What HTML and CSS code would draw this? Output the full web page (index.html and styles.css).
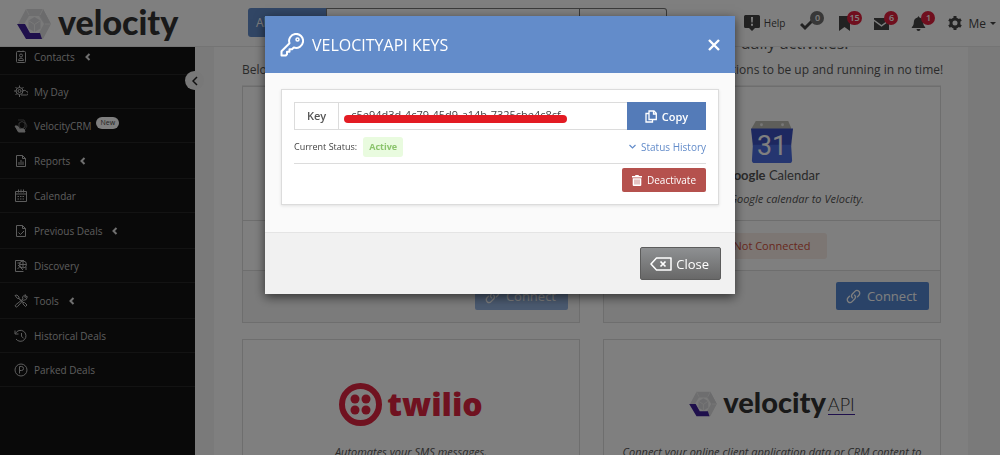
FILE: index.html
```
<!DOCTYPE html>
<html lang="en">

<head>
    <meta charset="UTF-8">
    <meta name="viewport" content="width=device-width, initial-scale=1.0">
    <title>Velocity - Integrations</title>
    <link rel="stylesheet" href="styles.css">
</head>

<body>
    <!-- shared shapes -->
    <svg class="sprite" aria-hidden="true">
        <symbol id="velocity-mark" viewBox="0 0 34 32">
            <path fill="#dcdcde" d="M9 1h17l8 15-8 15h-3l-3-6h-9L6 16H1z" />
            <path fill="#f4f4f4" d="M12 8h10l5 8-5 9H12l-5-9z" />
            <path fill="#d6d6d9" d="M26 1l8 15h-6l-5-9z" />
            <path fill="#d9d9dc" d="M11.500 12.500L17.500 9l6 3.500v8l-6 3.500-6-3.500z" />
            <path fill="none" stroke="#f0f0f0" stroke-width="1" d="M11.500 12.500l6 4 6-4M17.500 16.500V24M23 7l3-6M12 7L9 1M28 16h6" />
            <path fill="#3f2198" d="M0 16h8l5 9h10l2 6H9z" />
        </symbol>
        <symbol id="link" viewBox="0 0 16 16">
            <g fill="none" stroke="currentColor" stroke-width="1.4" stroke-linecap="round">
                <path d="M7 9.500a3 3 0 0 1-.2-4.200l2.700-2.800a3 3 0 0 1 4.300 4.200l-1.600 1.700" />
                <path d="M9 6.500a3 3 0 0 1 .2 4.200l-2.700 2.800a3 3 0 0 1-4.300-4.200l1.600-1.700" />
            </g>
        </symbol>
    </svg>

    <header class="topbar">
        <a class="logo" href="#">
            <svg class="logo__mark"><use href="#velocity-mark" /></svg>
            <span class="logo__text">velocity</span>
        </a>
        <form class="search">
            <button class="search__filter" type="button">All Deals</button>
            <input class="search__input" type="search" aria-label="Search">
            <button class="search__submit" type="button" aria-label="Run search"></button>
        </form>
        <nav class="tools">
            <a class="tools__item tools__item--help" href="#">
                <svg width="16" height="16" viewBox="0 0 16 16"><path fill="currentColor" d="M1.500 0h13A1.500 1.500 0 0 1 16 1.500v10a1.500 1.500 0 0 1-1.500 1.500H11l-3 3-3-3H1.500A1.500 1.500 0 0 1 0 11.500v-10A1.500 1.500 0 0 1 1.500 0z" /><path fill="#fff" d="M7 2h2l-.3 5.500H7.300zM7 8.800h2v2H7z" /></svg>
                <span>Help</span>
            </a>
            <a class="tools__item" href="#" aria-label="Tasks">
                <svg width="15" height="15" viewBox="0 0 15 15"><path fill="none" stroke="currentColor" stroke-width="3" d="M1 8l4 4 9-9" /></svg>
                <span class="badge badge--grey">0</span>
            </a>
            <a class="tools__item" href="#" aria-label="Bookmarks">
                <svg width="15" height="15" viewBox="0 0 15 15"><path fill="currentColor" d="M2 0h11v15l-5.500-4L2 15z" /></svg>
                <span class="badge">15</span>
            </a>
            <a class="tools__item" href="#" aria-label="Messages">
                <svg width="15" height="15" viewBox="0 0 15 15"><path fill="currentColor" d="M0 2h15v1.500L7.500 9 0 3.500zM0 5.200l7.500 5.500L15 5.200V14H0z" /></svg>
                <span class="badge">6</span>
            </a>
            <a class="tools__item" href="#" aria-label="Alerts">
                <svg width="15" height="15" viewBox="0 0 15 15"><path fill="currentColor" d="M7.500 0l1 1.500c2.500.5 3.700 2.500 3.700 5 0 2.500.8 3.500 2 4.700v.8H.8v-.8c1.200-1.200 2-2.200 2-4.700 0-2.500 1.200-4.500 3.700-5zM5.500 13h4a2 2 0 0 1-4 0z" /></svg>
                <span class="badge">1</span>
            </a>
            <a class="tools__item tools__item--me" href="#">
                <svg width="14" height="14" viewBox="0 0 14 14"><circle cx="7" cy="7" r="4" fill="none" stroke="currentColor" stroke-width="3" /><path stroke="currentColor" stroke-width="3" d="M7 0v3M7 11v3M1 3.500l2.500 1.500M10.500 9l2.500 1.500M1 10.500L3.500 9M10.500 5L13 3.500" /></svg>
                <span>Me</span>
                <i class="caret"></i>
            </a>
        </nav>
    </header>

    <aside class="sidebar">
        <ul class="menu">
            <li class="menu__item menu__item--parent">
                <a class="menu__link" href="#">
                    <svg class="menu__icon" viewBox="0 0 14 14"><rect x="2.500" y="1.500" width="9" height="11" rx="1" /><circle cx="7" cy="5.500" r="1.500" /><path d="M4.500 10.500c0-3 5-3 5 0zM5 0.500v1M9 0.500v1" /></svg>
                    <span>Contacts</span>
                    <svg class="menu__arrow" viewBox="0 0 6 8"><path d="M4.500 1l-3 3 3 3" /></svg>
                </a>
            </li>
            <li class="menu__item">
                <a class="menu__link" href="#">
                    <svg class="menu__icon" viewBox="0 0 14 14"><circle cx="5.500" cy="6" r="3.500" /><circle cx="5.500" cy="6" r="1.500" /><path d="M5.500.500v2M5.500 10v2M0 6h2M1.500 2l1.500 1.500M1.500 10L3 8.500M9.500 2L8 3.500M7 10h5.500a1.600 1.600 0 0 0 0-3.500A2.500 2.500 0 0 0 8 7" /></svg>
                    <span>My Day</span>
                </a>
            </li>
            <li class="menu__item">
                <a class="menu__link" href="#">
                    <svg class="menu__icon" viewBox="0 0 14 14"><path d="M4 1h6l3 6-3 5" opacity=".4" /><path d="M5 4l3-1.500L11 4v4L8 10 5 8z" opacity=".5" /><path fill="currentColor" d="M1 7h2.500l2 3H10l1 3H4.500z" /></svg>
                    <span>VelocityCRM</span>
                    <em class="menu__new">New</em>
                </a>
            </li>
            <li class="menu__item menu__item--parent">
                <a class="menu__link" href="#">
                    <svg class="menu__icon" viewBox="0 0 14 14"><path d="M2.500 1.500h6l3 3v8h-9zM8.500 1.500v3h3M5 11V8M7 11V6M9 11V7.500" /></svg>
                    <span>Reports</span>
                    <svg class="menu__arrow" viewBox="0 0 6 8"><path d="M4.500 1l-3 3 3 3" /></svg>
                </a>
            </li>
            <li class="menu__item">
                <a class="menu__link" href="#">
                    <svg class="menu__icon" viewBox="0 0 14 14"><path d="M1.500 2.500h11v10h-11zM1.500 5h11M4.500.500v3M9.500.500v3M7 .500v3" /><path stroke-dasharray="1.500 1" d="M3.500 7.500h7.500M3.500 10h7.500" /></svg>
                    <span>Calendar</span>
                </a>
            </li>
            <li class="menu__item menu__item--parent">
                <a class="menu__link" href="#">
                    <svg class="menu__icon" viewBox="0 0 14 14"><path d="M2.500 1.500h6l3 3v8h-9zM8.500 1.500v3h3M4.500 8.500l2 2 3.500-3.500" /></svg>
                    <span>Previous Deals</span>
                    <svg class="menu__arrow" viewBox="0 0 6 8"><path d="M4.500 1l-3 3 3 3" /></svg>
                </a>
            </li>
            <li class="menu__item">
                <a class="menu__link" href="#">
                    <svg class="menu__icon" viewBox="0 0 14 14"><path d="M10 1.500H1.500v11h8M3.500 4h3M3.500 10l3-3M4 6l5 5M12 8v3" /><circle cx="9" cy="5.500" r="3.500" /><path d="M5.500 5.500h7M9 2v7" /></svg>
                    <span>Discovery</span>
                </a>
            </li>
            <li class="menu__item menu__item--parent">
                <a class="menu__link" href="#">
                    <svg class="menu__icon" viewBox="0 0 14 14"><path d="M1 1.500l2-.5 2 2v1.500l4 4h1.500l2.500 2.500-1.500 1.500L9 10V8.500l-4-4H3.500zM9 5l-.5-2L10.500 1h1.500L10.500 3l.5.5L13 2v2l-1.500 2H9.500l-6 6.500a1 1 0 0 1-2-1.500z" /></svg>
                    <span>Tools</span>
                    <svg class="menu__arrow" viewBox="0 0 6 8"><path d="M4.500 1l-3 3 3 3" /></svg>
                </a>
            </li>
            <li class="menu__item">
                <a class="menu__link" href="#">
                    <svg class="menu__icon" viewBox="0 0 14 14"><path d="M1 1.500V5h3.500M1.500 4.500a5.500 5.500 0 1 1 .5 5.500M7.500 4v3.500l2 1.500" /></svg>
                    <span>Historical Deals</span>
                </a>
            </li>
            <li class="menu__item">
                <a class="menu__link" href="#">
                    <svg class="menu__icon" viewBox="0 0 14 14"><circle cx="7" cy="7" r="6" /><path d="M5.500 10.500v-7h2a2 2 0 0 1 0 4h-2" /></svg>
                    <span>Parked Deals</span>
                </a>
            </li>
        </ul>
        <button class="sidebar__toggle" type="button" aria-label="Collapse menu">
            <svg width="6" height="10" viewBox="0 0 6 10"><path fill="none" stroke="currentColor" stroke-width="1.500" d="M5 1L1 5l4 4" /></svg>
        </button>
    </aside>

    <main class="content">
        <section class="panel">
            <h1 class="panel__title">Connect Velocity to the applications you use with your daily activities.</h1>
            <p class="panel__intro">Below is a list of our integrations, pick the ones you need and follow their simple instructions to be up and running in no time!</p>
            <div class="cards">
                <article class="card">
                    <div class="card__body"></div>
                    <div class="card__status"></div>
                    <div class="card__footer">
                        <button class="connect" type="button" disabled><svg width="15" height="15"><use href="#link" /></svg>Connect</button>
                    </div>
                </article>
                <article class="card">
                    <div class="card__body">
                        <div class="card__logo card__logo--google">
                            <svg width="44" height="44" viewBox="0 0 46 46">
                                <path fill="#bdbdb5" d="M6 1h34l3 7v4H2V8z" />
                                <circle cx="12" cy="5" r="1.500" fill="#eee" /><circle cx="34" cy="5" r="1.500" fill="#eee" />
                                <path fill="#3a50c0" d="M1 9h44l-2 18H3z" />
                                <path fill="#4a6ce0" d="M3 26h40l1 16q0 3-3 3H5q-3 0-3-3z" />
                                <text class="date" x="23" y="37" text-anchor="middle">31</text>
                            </svg>
                            <span><b>Google</b> Calendar</span>
                        </div>
                        <p class="card__text">Sync your Google calendar to Velocity.</p>
                    </div>
                    <div class="card__status"><span class="state">Not Connected</span></div>
                    <div class="card__footer">
                        <button class="connect" type="button"><svg width="15" height="15"><use href="#link" /></svg>Connect</button>
                    </div>
                </article>
                <article class="card">
                    <div class="card__body">
                        <div class="card__logo card__logo--twilio">
                            <svg width="43" height="43" viewBox="0 0 43 43">
                                <circle cx="21.500" cy="21.500" r="18.500" fill="none" stroke="currentColor" stroke-width="6" />
                                <g fill="currentColor"><circle cx="16" cy="16" r="4.500" /><circle cx="27" cy="16" r="4.500" /><circle cx="16" cy="27" r="4.500" /><circle cx="27" cy="27" r="4.500" /></g>
                            </svg>
                            <span>twilio</span>
                        </div>
                        <p class="card__text">Automates your SMS messages.</p>
                    </div>
                </article>
                <article class="card">
                    <div class="card__body">
                        <div class="card__logo card__logo--api">
                            <svg width="28" height="26"><use href="#velocity-mark" /></svg>
                            <span class="api-name">velocity</span>
                            <span class="api-tag">API</span>
                        </div>
                        <p class="card__text">Connect your online client application data or CRM content to Velocity.</p>
                    </div>
                </article>
            </div>
        </section>
    </main>

    <div class="backdrop">
        <div class="modal" role="dialog" aria-modal="true" aria-labelledby="modal-title">
            <div class="modal__header">
                <svg width="24" height="24" viewBox="0 0 24 24"><path fill="none" stroke="currentColor" stroke-width="2" stroke-linejoin="round" d="M9.500 10.200A7 7 0 1 1 13.800 14.500L12 16.300H9.500v2.500H7v2.500L5.800 22.500H1.500V18.200z" /><circle cx="17.500" cy="6.500" r="1.500" fill="none" stroke="currentColor" stroke-width="1.500" /></svg>
                <h2 class="modal__title" id="modal-title">VELOCITYAPI KEYS</h2>
                <button class="modal__close" type="button" aria-label="Close dialog">
                    <svg width="12" height="12" viewBox="0 0 12 12"><path stroke="currentColor" stroke-width="2.400" d="M1 1l10 10M11 1L1 11" /></svg>
                </button>
            </div>
            <div class="modal__body">
                <div class="key">
                    <div class="key__group">
                        <label class="key__label" for="api-key">Key</label>
                        <div class="key__field">
                            <input class="key__input" id="api-key" type="text" value="c5e94d3d-4c79-45d9-a14b-7325cbe4c8cf" readonly>
                            <span class="key__mask"></span>
                        </div>
                        <button class="key__copy" type="button">
                            <svg width="12" height="13" viewBox="0 0 12 13"><path fill="none" stroke="currentColor" stroke-width="1.300" d="M4 1h5l2.300 2.300V9.500H4zM8.500 1v3h3M4 3.500H1V12h6.500V9.500" /></svg>
                            Copy
                        </button>
                    </div>
                    <div class="key__status">
                        <span>Current Status:</span>
                        <strong class="key__active">Active</strong>
                        <a class="key__history" href="#">
                            <svg width="7" height="5" viewBox="0 0 7 5"><path fill="none" stroke="currentColor" stroke-width="1.200" d="M.5 1l3 3 3-3" /></svg>
                            Status History
                        </a>
                    </div>
                    <div class="key__actions">
                        <button class="key__deactivate" type="button">
                            <svg width="10" height="11" viewBox="0 0 10 11"><path fill="currentColor" d="M0 1h3l.5-1h3L7 1h3v1.500H0zM.7 3.200h8.600V10q0 1-1 1H1.700q-1 0-1-1z" /><path stroke="#b5514d" stroke-width=".7" d="M3 4.500v5M5 4.500v5M7 4.500v5" /></svg>
                            Deactivate
                        </button>
                    </div>
                </div>
            </div>
            <div class="modal__footer">
                <button class="close" type="button">
                    <svg width="22" height="14" viewBox="0 0 22 14"><path fill="none" stroke="currentColor" stroke-width="1.500" stroke-linejoin="round" d="M6.500 1H21v12H6.500L1 7z" /><path stroke="currentColor" stroke-width="1.700" d="M10.500 4.500l5 5M15.500 4.500l-5 5" /></svg>
                    Close
                </button>
            </div>
        </div>
    </div>
</body>

</html>
```
FILE: styles.css
```
:root {
    --blue: #638cca;
    --blue-dark: #547bb8;
    --line: #dcdcdc;
    --text: #555555;
}

* {
    box-sizing: border-box;
}

body {
    background-color: #f4f4f4;
    color: var(--text);
    display: flex;
    font-family: 'Open Sans', sans-serif;
    font-size: 12px;
    height: 100vh;
    margin: 0;
    overflow: hidden;
}

button,
input {
    font-family: inherit;
}

a {
    color: inherit;
    text-decoration: none;
}

svg {
    flex-shrink: 0;
}

.sprite {
    display: none;
}

/* top bar */

.topbar {
    align-items: center;
    background-color: #ffffff;
    border-bottom: 1px solid #e8e8e8;
    display: flex;
    height: 47px;
    left: 0;
    padding: 0 4px 0 17px;
    position: fixed;
    right: 0;
    top: 0;
    z-index: 2;
}

.logo {
    align-items: center;
    color: #333333;
    display: flex;
    gap: 7px;
    width: 231px;
}

.logo__mark {
    height: 32px;
    margin-top: 2px;
    width: 34px;
}

.logo__text {
    font-family: Lato, sans-serif;
    font-size: 34px;
    font-weight: 900;
    line-height: 40px;
    padding-bottom: 2px;
}

.search {
    display: flex;
    height: 29px;
    margin-bottom: 2px;
    width: 419px;
}

.search__filter {
    background-color: var(--blue);
    border: 0;
    border-radius: 3px 0 0 3px;
    color: #ffffff;
    font-size: 12px;
    padding: 0 8px;
    text-align: left;
    width: 78px;
}

.search__input {
    background-color: #ffffff;
    border: 1px solid #777777;
    flex: 1;
    min-width: 0;
}

.search__submit {
    background-color: #ffffff;
    border: 1px solid #777777;
    border-left: 0;
    border-radius: 0 3px 3px 0;
    width: 87px;
}

.tools {
    align-items: center;
    color: #444444;
    display: flex;
    gap: 22px;
    margin-left: auto;
}

.tools__item {
    align-items: center;
    display: flex;
    position: relative;
}

.tools__item--help {
    font-size: 10px;
    gap: 4px;
    margin-right: -7px;
}

.tools__item--me {
    font-size: 12px;
    gap: 6px;
}

.tools__item--me .caret {
    margin-left: -2px;
}

.badge {
    background-color: #e01f3d;
    border-radius: 7px;
    color: #ffffff;
    font-size: 9px;
    font-weight: 600;
    left: 10px;
    line-height: 14px;
    min-width: 14px;
    padding: 0 2px;
    position: absolute;
    text-align: center;
    top: -5px;
}

.badge--grey {
    background-color: #707070;
}

.caret {
    border: 3px solid transparent;
    border-bottom: 0;
    border-top-color: #444444;
}

/* sidebar */

.sidebar {
    background-color: #121212;
    flex: 0 0 195px;
    padding-top: 39px;
    position: relative;
}

.sidebar__toggle {
    align-items: center;
    background-color: #f0f0f0;
    border: 0;
    border-radius: 50%;
    color: #222222;
    display: flex;
    height: 19px;
    justify-content: center;
    padding: 0;
    position: absolute;
    right: -9px;
    top: 71px;
    width: 19px;
}

.menu {
    list-style: none;
    margin: 0;
    padding: 0;
}

.menu__item {
    border-bottom: 1px solid #262626;
    height: 34px;
}

.menu__item--parent {
    height: 36px;
}

.menu__link {
    align-items: center;
    color: #bbbbbb;
    display: flex;
    font-size: 10px;
    height: 100%;
    padding-left: 14px;
}

.menu__icon {
    fill: none;
    height: 14px;
    margin-right: 6px;
    stroke: currentColor;
    width: 14px;
}

.menu__arrow {
    fill: none;
    height: 8px;
    margin-left: 10px;
    stroke: #e0e0e0;
    stroke-width: 2;
    width: 6px;
}

.menu__new {
    background-color: #ffffff;
    border-radius: 7px;
    color: #444444;
    font-size: 7px;
    font-style: normal;
    line-height: 12px;
    margin: 0 0 5px 5px;
    padding: 0 4px;
}

/* page content */

.content {
    flex: 1;
    min-width: 0;
    padding: 0 32px 0 19px;
}

.panel {
    background-color: #ffffff;
    min-height: 100%;
    padding: 32px 27px 0 28px;
}

.panel__title {
    font-size: 16px;
    font-weight: 400;
    line-height: 22px;
    margin: 0;
    text-align: center;
}

.panel__intro {
    border-bottom: 1px solid #ededed;
    font-size: 12px;
    line-height: 22px;
    margin: 0;
    padding: 5px 0 4px;
    text-align: center;
    white-space: nowrap;
}

.cards {
    display: grid;
    gap: 16px 23px;
    grid-template-columns: 1fr 1fr;
}

.card {
    border: 1px solid var(--line);
    display: flex;
    flex-direction: column;
}

.card__body {
    align-items: center;
    display: flex;
    flex: 1;
    flex-direction: column;
    min-height: 133px;
    padding: 24px 12px 0;
    text-align: center;
}

.card__logo {
    align-items: center;
    display: flex;
    height: 80px;
    justify-content: center;
}

.card__logo--google {
    flex-direction: column;
    font-family: Lato, sans-serif;
    font-size: 13px;
    gap: 3px;
}

.date {
    fill: #ffffff;
    font-family: Roboto, sans-serif;
    font-size: 28px;
}

.card__logo--twilio {
    color: #e02540;
    font-size: 32px;
    font-weight: 800;
    gap: 5px;
    line-height: 40px;
}

.card__logo--api {
    color: #333333;
    font-family: Lato, sans-serif;
}

.api-name {
    font-size: 29px;
    font-weight: 900;
    line-height: 32px;
    margin: 0 2px 4px 6px;
}

.api-tag {
    border-bottom: 1px solid #3f2198;
    font-size: 18px;
    font-weight: 300;
    line-height: 20px;
}

.card__text {
    font-size: 11px;
    font-style: italic;
    line-height: 16px;
    margin: 0;
}

.card__status {
    border-top: 1px solid var(--line);
    height: 50px;
    padding: 12px;
    text-align: center;
}

.state {
    background-color: #f8ece6;
    border-radius: 3px;
    color: #d0503c;
    display: inline-block;
    font-size: 11px;
    line-height: 26px;
    padding: 0 16px;
}

.card__footer {
    background-color: #f7f7f7;
    border-top: 1px solid var(--line);
    display: flex;
    height: 52px;
    justify-content: flex-end;
    padding: 11px;
}

.connect {
    align-items: center;
    background-color: #5587d0;
    border: 0;
    border-radius: 2px;
    color: #ffffff;
    display: flex;
    font-size: 13px;
    gap: 6px;
    height: 28px;
    padding: 0 12px 0 10px;
}

.connect:disabled {
    opacity: 0.6;
}

/* modal */

.backdrop {
    background-color: rgba(0, 0, 0, 0.5);
    inset: 0;
    padding: 16px;
    position: fixed;
    z-index: 3;
}

.modal {
    background-color: #fafafa;
    box-shadow: 0 3px 10px rgba(0, 0, 0, 0.6);
    margin: 0 auto;
    max-width: 470px;
}

.modal__header {
    align-items: center;
    background-color: var(--blue);
    color: #ffffff;
    display: flex;
    gap: 8px;
    height: 57px;
    padding: 0 15px;
}

.modal__title {
    font-size: 16px;
    font-weight: 400;
    margin: 0;
}

.modal__close {
    background: none;
    border: 0;
    color: inherit;
    display: flex;
    margin-left: auto;
    padding: 0;
}

.modal__body {
    padding: 16px 16px 27px;
}

.modal__footer {
    background-color: #f1f1f1;
    border-top: 1px solid #e4e4e4;
    display: flex;
    justify-content: flex-end;
    padding: 14px;
}

.key {
    background-color: #ffffff;
    border: 1px solid var(--line);
    box-shadow: 0 1px 3px rgba(0, 0, 0, 0.1);
    padding: 12px;
}

.key__group {
    display: flex;
    height: 28px;
}

.key__label {
    border: 1px solid var(--line);
    font-size: 11px;
    font-weight: 600;
    line-height: 26px;
    padding: 0 12px;
}

.key__field {
    flex: 1;
    position: relative;
}

.key__input {
    border: 1px solid var(--line);
    border-left: 0;
    border-right: 0;
    color: #444444;
    font-size: 11px;
    height: 100%;
    padding: 0 12px 4px;
    width: 100%;
}

.key__mask {
    background-color: #e31b23;
    border-radius: 4px;
    height: 8px;
    left: 5px;
    position: absolute;
    top: 13px;
    width: 223px;
}

.key__copy {
    align-items: center;
    background-color: var(--blue-dark);
    border: 0;
    color: #ffffff;
    display: flex;
    font-size: 11px;
    font-weight: 600;
    gap: 5px;
    justify-content: center;
    width: 79px;
}

.key__status {
    align-items: center;
    border-bottom: 1px solid var(--line);
    color: #444444;
    display: flex;
    font-size: 9px;
    gap: 6px;
    height: 34px;
}

.key__active {
    background-color: #e9fbdf;
    border-radius: 3px;
    color: #8bc46c;
    line-height: 20px;
    padding: 0 6px;
}

.key__history {
    align-items: center;
    color: var(--blue);
    display: flex;
    font-size: 10px;
    gap: 5px;
    margin-left: auto;
}

.key__actions {
    display: flex;
    justify-content: flex-end;
    padding-top: 4px;
}

.key__deactivate {
    align-items: center;
    background-color: #b5514d;
    border: 0;
    border-radius: 2px;
    color: #ffffff;
    display: flex;
    font-size: 10px;
    gap: 5px;
    height: 24px;
    padding: 0 10px;
}

.close {
    align-items: center;
    background-image: linear-gradient(#8e9092, #686868);
    border: 1px solid #5c5c5c;
    border-radius: 2px;
    color: #ffffff;
    display: flex;
    font-size: 13px;
    gap: 4px;
    height: 33px;
    padding: 0 11px 0 9px;
}
```
